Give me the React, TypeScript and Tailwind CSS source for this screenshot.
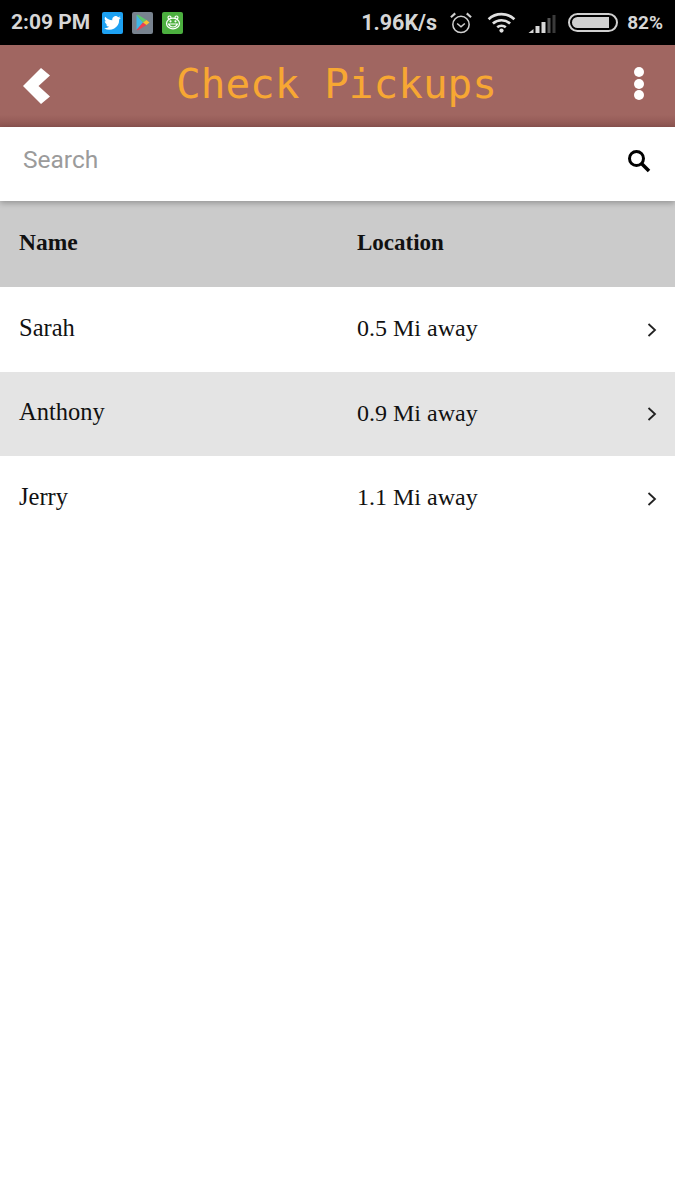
const serif = "font-['Liberation_Serif','Times_New_Roman',serif]";

function Chevron() {
  return (
    <svg width="10" height="16" viewBox="0 0 10 16" fill="none" stroke="#222" strokeWidth="1.800" className="mr-[18px] mt-[3px]">
      <path d="M1.500 2 L8 8 L1.500 14" />
    </svg>
  );
}

function Row({ name, loc, shaded }: { name: string; loc: string; shaded?: boolean }) {
  return (
    <div className={`flex h-[84.5px] items-center pb-[2px] pl-[19px] text-[24.5px] text-[#111] ${serif} ${shaded ? "bg-[#e4e4e4]" : "bg-white"}`}>
      <div className="w-[338px]">{name}</div>
      <div className="flex-1 text-[24px]">{loc}</div>
      <Chevron />
    </div>
  );
}

function StatusBar() {
  return (
    <div className="flex h-[45px] items-center bg-black pl-[11px] pr-[12px] font-['Roboto','Liberation_Sans',sans-serif] text-[21px] font-bold text-[#d6d6d6]">
      <span className="w-[91px] pt-[1px]">2:09 PM</span>
      <div className="flex h-[22px] w-[21px] items-center justify-center rounded-[2px] bg-[#1da1f2]">
        <svg width="17" height="14" viewBox="0 0 24 20" fill="#fff">
          <path d="M24 2.400a9.800 9.800 0 0 1-2.800.8A4.900 4.900 0 0 0 23.300.5a9.800 9.800 0 0 1-3.100 1.200 4.900 4.900 0 0 0-8.400 4.500A14 14 0 0 1 1.700 1a4.900 4.900 0 0 0 1.500 6.600 4.900 4.900 0 0 1-2.200-.6c0 2.400 1.700 4.400 3.900 4.900a4.900 4.900 0 0 1-2.200.1 4.900 4.900 0 0 0 4.600 3.400A9.900 9.900 0 0 1 0 17.400 14 14 0 0 0 21.500 5a10 10 0 0 0 2.500-2.600z" />
        </svg>
      </div>
      <div className="ml-[9px] flex h-[22px] w-[21px] items-center justify-center rounded-[2px] bg-[#78838f]">
        <svg width="15" height="17" viewBox="0 0 15 17">
          <path d="M1.500 1 L8 8.500 L1.500 16 Z" fill="#3fb6e8" />
          <path d="M3 .8 L11.500 6 L8 8.500 L1.500 1 Z" fill="#5ecb6b" />
          <path d="M3 16.200 L11.500 11 L8 8.500 L1.500 16 Z" fill="#ef4050" />
          <path d="M11.500 6 L14.500 8.500 L11.500 11 L8 8.500 Z" fill="#fbc02d" />
        </svg>
      </div>
      <div className="ml-[9px] flex h-[22px] w-[21px] items-center justify-center rounded-[2px] bg-[#4caf3f]">
        <svg width="16" height="15" viewBox="0 0 16 15" fill="none" stroke="#fff" strokeWidth="1.200">
          <circle cx="4.500" cy="2.500" r="1.500" />
          <circle cx="11.500" cy="2.500" r="1.500" />
          <ellipse cx="8" cy="8.500" rx="6.500" ry="5.300" />
          <path d="M3.500 9 H12.500 Q11 12 8 12 Q5 12 3.500 9Z" />
          <circle cx="5.500" cy="6.300" r=".5" />
          <circle cx="10.500" cy="6.300" r=".5" />
        </svg>
      </div>
      <span className="ml-auto pt-[1px] text-[21.5px]">1.96K/s</span>
      <svg className="ml-[12px]" width="24" height="24" viewBox="0 0 25 24" fill="none" stroke="#d0d0d0" strokeWidth="1.600">
        <circle cx="12.500" cy="13.500" r="8.500" />
        <path d="M8.500 12.500 L12.500 16 L16.500 12.500" />
        <path d="M2 6 L6.500 2 M23 6 L18.500 2" strokeWidth="2.200" />
      </svg>
      <svg className="ml-[14px]" width="29" height="21" viewBox="0 0 30 22" fill="none" stroke="#e0e0e0" strokeWidth="2.800">
        <path d="M1.500 7.500 C9 .5 21 .5 28.500 7.500" />
        <path d="M6 12 C11 7.500 19 7.500 24 12" />
        <path d="M10.500 16 C13 14 17 14 19.500 16" />
        <circle cx="15" cy="19.500" r="2.200" fill="#e0e0e0" stroke="none" />
      </svg>
      <svg className="ml-[12px] mt-[2px]" width="29" height="20" viewBox="0 0 28 20">
        <path d="M0 19 L5 15 V19 Z" fill="#d8d8d8" />
        <rect x="7" y="12" width="4" height="7" fill="#d8d8d8" />
        <rect x="13" y="8" width="4" height="11" fill="#d8d8d8" />
        <rect x="19" y="4" width="3" height="15" fill="#555" />
        <rect x="24" y="1" width="3" height="18" fill="#3a3a3a" />
      </svg>
      <div className="ml-[11px] flex h-[19px] w-[50px] items-center rounded-full border-2 border-[#d0d0d0] p-[2px]">
        <div className="h-full w-[37px] rounded-l-full rounded-r-[1px] bg-[#d0d0d0]" />
      </div>
      <span className="ml-[9px] pt-[1px] text-[19px]">82%</span>
    </div>
  );
}

export default function App() {
  return (
    <div className="min-h-[1200px] bg-white">
      <StatusBar />
      <div className="relative flex h-[82px] items-center justify-between bg-[#a06661] bg-gradient-to-b from-[#a06661] from-[85%] to-[#8e5551] pl-[23px] pr-[31px]">
        <svg width="28" height="36" viewBox="0 0 28 36" fill="#fff">
          <path d="M18 0 L27 7.500 L15.500 18 L27 28.500 L18 36 L0 18 Z" />
        </svg>
        <span className="mb-[3px] mr-[12px] font-['DejaVu_Sans_Mono','Liberation_Mono',monospace] text-[41px] leading-none text-[#f7a733]">Check Pickups</span>
        <div className="mb-[5px] flex flex-col gap-[1.5px]">
          <div className="h-[10px] w-[10px] rounded-full bg-white" />
          <div className="h-[10px] w-[10px] rounded-full bg-white" />
          <div className="h-[10px] w-[10px] rounded-full bg-white" />
        </div>
      </div>
      <div className="relative z-10 flex h-[74px] items-center justify-between bg-white pb-[6px] pl-[23px] pr-[24px] shadow-[0_2px_6px_rgba(0,0,0,0.28)]">
        <span className="mb-[2px] font-['Roboto','Liberation_Sans',sans-serif] text-[24.5px] text-[#9b9b9b]">Search</span>
        <svg width="24" height="24" viewBox="0 0 24 24" fill="none" stroke="#000" strokeWidth="3">
          <circle cx="9.500" cy="9.500" r="7" />
          <path d="M14.500 14.500 L22 22" strokeWidth="3.500" />
        </svg>
      </div>
      <div className={`flex h-[86px] items-center bg-[#cbcbcb] pb-[2px] pl-[19px] text-[23.5px] font-bold text-[#111] ${serif}`}>
        <div className="w-[338px]">Name</div>
        <div className="text-[23px]">Location</div>
      </div>
      <Row name="Sarah" loc="0.5 Mi away" />
      <Row name="Anthony" loc="0.9 Mi away" shaded />
      <Row name="Jerry" loc="1.1 Mi away" />
    </div>
  );
}
